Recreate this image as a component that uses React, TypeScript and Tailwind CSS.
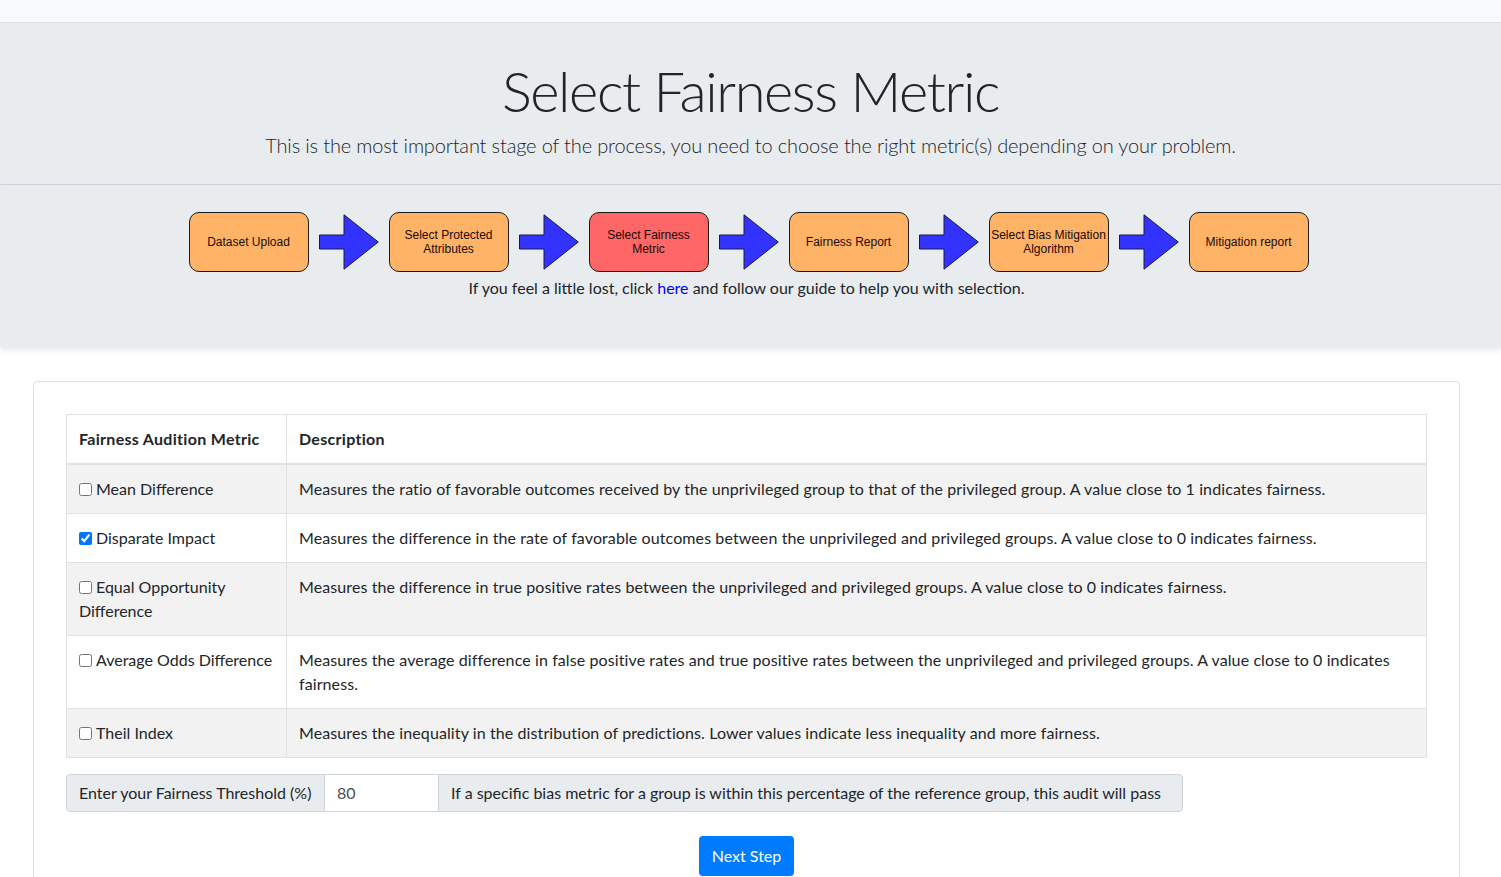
import { useState } from 'react';

// Etapas del proceso
const steps = [
  { label: 'Dataset Upload', active: false },
  { label: 'Select Protected Attributes', active: false },
  { label: 'Select Fairness Metric', active: true },
  { label: 'Fairness Report', active: false },
  { label: 'Select Bias Mitigation Algorithm', active: false },
  { label: 'Mitigation report', active: false },
];

const metrics = [
  {
    id: 'mean_difference',
    name: 'Mean Difference',
    desc: 'Measures the ratio of favorable outcomes received by the unprivileged group to that of the privileged group. A value close to 1 indicates fairness.',
  },
  {
    id: 'disparate_impact',
    name: 'Disparate Impact',
    desc: 'Measures the difference in the rate of favorable outcomes between the unprivileged and privileged groups. A value close to 0 indicates fairness.',
  },
  {
    id: 'equal_opportunity',
    name: 'Equal Opportunity Difference',
    desc: 'Measures the difference in true positive rates between the unprivileged and privileged groups. A value close to 0 indicates fairness.',
  },
  {
    id: 'average_odds',
    name: 'Average Odds Difference',
    desc: 'Measures the average difference in false positive rates and true positive rates between the unprivileged and privileged groups. A value close to 0 indicates fairness.',
  },
  {
    id: 'theil_index',
    name: 'Theil Index',
    desc: 'Measures the inequality in the distribution of predictions. Lower values indicate less inequality and more fairness.',
  },
];

const Arrow = () => (
  <svg width="60" height="56" viewBox="0 0 60 56" className="shrink-0">
    <polygon points="0.5,21 25,21 25,0.8 59.3,28 25,55.2 25,35 0.5,35" fill="#3333ff" stroke="#1a1a40" strokeWidth="1" />
  </svg>
);

const StepBox = ({ label, active }: { label: string; active: boolean }) => (
  <div
    className={`w-[120px] h-[60px] shrink-0 rounded-[10px] border border-[#1a1a1a] flex items-center justify-center text-center text-[12px] leading-[14px] text-[#1a0a0a] ${active ? 'bg-[#ff6666]' : 'bg-[#ffb366]'}`}
    style={{ fontFamily: '"Liberation Sans", Arial, sans-serif' }}
  >
    {label}
  </div>
);

export default function App() {
  const [checked, setChecked] = useState<Record<string, boolean>>({ disparate_impact: true });
  const [threshold, setThreshold] = useState('80');

  return (
    <div className="min-h-[877px] bg-white text-[#212529] font-['Lato','Open_Sans',sans-serif] text-[16px] leading-6">
      {/* barra superior */}
      <div className="h-[23px] bg-[#f8f9fa] border-b border-[#dee2e6]"></div>

      {/* encabezado */}
      <div className="bg-[#e9ecef] border-b border-[#ced4da] pt-[34px] pb-[24px] text-center">
        <h1 className="text-[56px] leading-[67px] font-light tracking-[-1.4px]">Select Fairness Metric</h1>
        <p className="mt-[6px] text-[20px] leading-[30px] font-light tracking-[-0.15px]">
          This is the most important stage of the process, you need to choose the right metric(s) depending on your problem.
        </p>
      </div>

      {/* diagrama de flujo */}
      <div className="bg-[#e9ecef] pt-[27px] pb-[47px] shadow-[0_3px_6px_rgba(0,0,0,0.1)]">
        <div className="flex items-center justify-center gap-[10px] mr-[4px]">
          {steps.map((s, i) => (
            <div key={s.label} className="flex items-center gap-[10px]">
              <StepBox label={s.label} active={s.active} />
              {i < steps.length - 1 && <Arrow />}
            </div>
          ))}
        </div>
        <p className="text-center mt-[4px] mr-[8px]">
          If you feel a little lost, click <a href="#" className="text-[#0000ff]">here</a> and follow our guide to help you with selection.
        </p>
      </div>

      {/* tarjeta principal */}
      <div className="mt-[34px] ml-[33px] mr-[41px] border border-[#dfdfdf] rounded-[4px] p-8 pb-0 h-[600px]">
        <table className="w-full border-collapse border border-[#dee2e6]">
          <thead>
            <tr>
              <th className="w-[220px] text-left font-bold px-3 py-3 border border-[#dee2e6] border-b-2 tracking-[0.3px]">Fairness Audition Metric</th>
              <th className="text-left font-bold px-3 py-3 border border-[#dee2e6] border-b-2 tracking-[0.3px]">Description</th>
            </tr>
          </thead>
          <tbody>
            {metrics.map((m, i) => (
              <tr key={m.id} className={i % 2 === 0 ? 'bg-[#f2f2f2]' : 'bg-white'}>
                <td className="w-[220px] align-top px-3 py-3 border border-[#dee2e6]">
                  <input
                    type="checkbox"
                    className="w-[13px] h-[13px] mr-[4px] align-[-1px]"
                    checked={!!checked[m.id]}
                    onChange={(e) => setChecked({ ...checked, [m.id]: e.target.checked })}
                  />
                  {m.name}
                </td>
                <td className="align-top px-3 py-3 border border-[#dee2e6] tracking-[0.1px]">{m.desc}</td>
              </tr>
            ))}
          </tbody>
        </table>

        <div className="flex mt-[16px] h-[38px] whitespace-nowrap">
          <span className="flex items-center px-3 w-[259px] shrink-0 bg-[#e9ecef] border border-[#ced4da] rounded-l-[4px]">Enter your Fairness Threshold (%)</span>
          <input
            type="text"
            value={threshold}
            onChange={(e) => setThreshold(e.target.value)}
            className="w-[113px] shrink-0 px-3 text-[#495057] border-y border-[#ced4da] bg-white outline-none"
          />
          <span className="flex items-center px-3 w-[745px] shrink-0 bg-[#e9ecef] border border-[#ced4da] rounded-r-[4px]">
            If a specific bias metric for a group is within this percentage of the reference group, this audit will pass
          </span>
        </div>

        <div className="flex justify-center mt-[24px]">
          <button className="h-[40px] w-[95px] bg-[#007bff] text-white rounded-[4px] text-[16px]">Next Step</button>
        </div>

        <p className="text-center text-[14px] mt-[-1px]">
          © 2024 Personal and Fair Auditing framework for Classification Machine Learning Methods | <a href="#" className="text-[#007bff]">University of Cyprus</a>
        </p>
      </div>
    </div>
  );
}
